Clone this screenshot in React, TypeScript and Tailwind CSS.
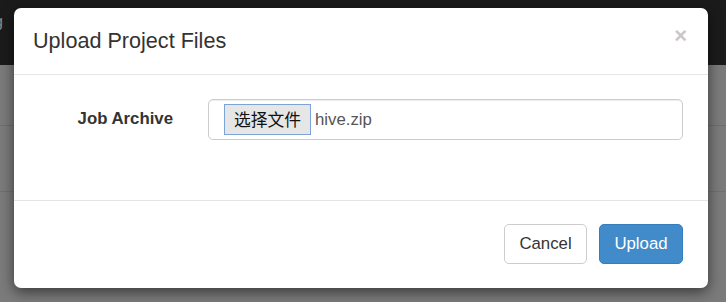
// Upload dialog over a dimmed page — Bootstrap-ish modal at 1.2x zoom.
export default function App() {
  return (
    <div className="relative h-[302px] w-[726px] overflow-hidden bg-[#7b7b7b] font-['Liberation_Sans',Arial,sans-serif]">
      {/* dimmed page behind the modal */}
      <div className="flex h-[65px] items-start bg-[#1b1b1b] pt-[10px]">
        <span className="-ml-[6px] text-[16px] text-[#8a8a8a]">g</span>
      </div>
      <div className="h-[61px] border-b border-[#6e6e6e]" />
      <div className="h-[66px] border-b border-[#707070]" />

      <div className="absolute left-[14px] top-[8px] flex w-[694px] flex-col rounded-[7px] bg-white shadow-[0_4px_14px_rgba(0,0,0,0.55)]">
        <div className="flex h-[67px] items-center justify-between border-b border-[#e5e5e5] pl-[19px] pr-[21px]">
          <h4 className="text-[21.6px] leading-none text-[#333]">Upload Project Files</h4>
          <button className="-mt-[10px] text-[22px] font-bold leading-none text-[#c8c8c8]">×</button>
        </div>

        <div className="flex h-[125px] items-start pt-[24px] pl-[19px] pr-[25px]">
          <label className="w-[140px] pt-[8px] text-right text-[16.8px] font-bold leading-[24px] text-[#333]">
            Job Archive
          </label>
          <div className="ml-[35px] flex h-[41px] flex-1 items-center rounded-[5px] border border-[#cccccc] pl-[15px] shadow-[inset_0_1px_1px_rgba(0,0,0,0.075)]">
            <span className="flex h-[31px] w-[87px] items-center justify-center border border-[#7ca3d6] bg-[#e6e6e6] font-['Noto_Sans_CJK_SC',sans-serif] text-[16.8px] text-[#111]">
              选择文件
            </span>
            <span className="ml-[4px] text-[16.8px] text-[#555]">hive.zip</span>
          </div>
        </div>

        <div className="flex justify-end gap-[12px] border-t border-[#e5e5e5] pt-[23px] pr-[25px] pb-[24px]">
          <button className="h-[40px] w-[83px] rounded-[5px] border border-[#cccccc] bg-white text-[16.8px] text-[#333]">
            Cancel
          </button>
          <button className="h-[40px] w-[84px] rounded-[5px] border border-[#357ebd] bg-[#428bca] text-[16.8px] text-white">
            Upload
          </button>
        </div>
      </div>
    </div>
  );
}
